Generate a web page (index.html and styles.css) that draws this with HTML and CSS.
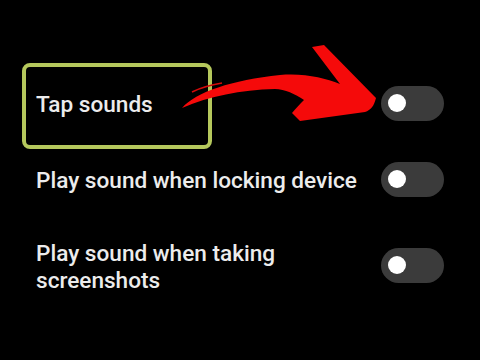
FILE: index.html
```html
<!DOCTYPE html>
<html>
<head>
<meta charset="utf-8">
<link rel="stylesheet" href="styles.css">
</head>
<body>
<div class="screen">
  <ul class="list">
    <li class="row"><span class="label">Tap sounds</span><span class="toggle"><span class="knob"></span></span></li>
    <li class="row"><span class="label">Play sound when locking device</span><span class="toggle"><span class="knob"></span></span></li>
    <li class="row tall"><span class="label">Play sound when taking<br>screenshots</span><span class="toggle"><span class="knob"></span></span></li>
  </ul>
  <div class="highlight"></div>
  <svg class="arrow" width="480" height="360" viewBox="0 0 480 360">
    <path fill="#f50a0a" d="M182,108 C196,92 232,80 280,75 C305,73 324,78 340,84 L312,47 L324,45 L376,98 C374,106 371,110 365,112 L300,121 L292,113 C296,108 300,104 304,100 C295,94 285,89 275,89 C240,90 210,96 182,108 Z"/>
    <path fill="none" stroke="#d40a0a" stroke-width="1.5" d="M192,92 C200,88 210,85 222,83"/>
  </svg>
</div>
</body>
</html>
```
FILE: styles.css
```css
html, body {
  margin: 0;
  padding: 0;
  background: #000;
}
.screen {
  position: relative;
  width: 480px;
  height: 360px;
  overflow: hidden;
  background: #000;
  font-family: Roboto, "Liberation Sans", sans-serif;
  color: #ececec;
}
.list {
  list-style: none;
  margin: 0;
  padding: 65px 36px 0 36px;
}
.row {
  display: flex;
  align-items: center;
  justify-content: space-between;
  height: 76px;
}
.row.tall {
  height: 96px;
}
.label {
  font-size: 22.6px;
  font-weight: 500;
  line-height: 27px;
  padding-top: 3px;
}
.toggle {
  flex: none;
  width: 63px;
  height: 35px;
  border-radius: 18px;
  background: #3b3b3b;
  display: flex;
  align-items: center;
  padding-left: 7px;
  box-sizing: border-box;
}
.knob {
  width: 18px;
  height: 18px;
  border-radius: 50%;
  background: #fff;
}
.highlight {
  position: absolute;
  left: 22px;
  top: 63px;
  width: 190px;
  height: 86px;
  box-sizing: border-box;
  border: 4px solid #b5c85c;
  border-radius: 8px;
}
.arrow {
  position: absolute;
  left: 0;
  top: 0;
}
```
